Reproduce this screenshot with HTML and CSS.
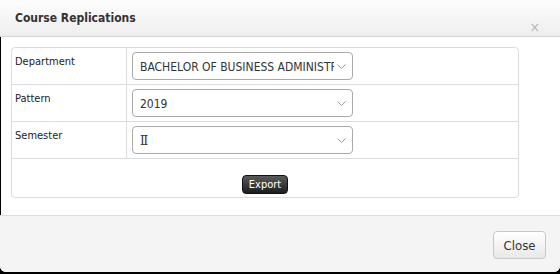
FILE: index.html
```html
<!DOCTYPE html>
<html lang="en">

<head>
    <meta charset="UTF-8">
    <meta name="viewport" content="width=device-width, initial-scale=1.0">
    <title>Course Replications</title>

    <link rel="stylesheet" href="styles.css">
</head>

<body>

    <div class="modal">
        <div class="modal-header">
            <h4>Course Replications</h4>
            <span class="close-x">&times;</span>
        </div>

        <div class="modal-body">
            <!-- Replication filters -->
            <table class="panel">
                <tbody>
                    <tr>
                        <td class="label">Department</td>
                        <td>
                            <div class="select">
                                <span class="value">BACHELOR OF BUSINESS ADMINISTRATION</span>
                                <svg width="9" height="5" viewBox="0 0 9 5"><path d="M0.5 0.5 L4.5 4.5 L8.5 0.5" fill="none" stroke="#999" stroke-width="1"/></svg>
                            </div>
                        </td>
                    </tr>
                    <tr>
                        <td class="label">Pattern</td>
                        <td>
                            <div class="select">
                                <span class="value">2019</span>
                                <svg width="9" height="5" viewBox="0 0 9 5"><path d="M0.5 0.5 L4.5 4.5 L8.5 0.5" fill="none" stroke="#999" stroke-width="1"/></svg>
                            </div>
                        </td>
                    </tr>
                    <tr>
                        <td class="label">Semester</td>
                        <td>
                            <div class="select">
                                <span class="value roman">&#8545;</span>
                                <svg width="9" height="5" viewBox="0 0 9 5"><path d="M0.5 0.5 L4.5 4.5 L8.5 0.5" fill="none" stroke="#999" stroke-width="1"/></svg>
                            </div>
                        </td>
                    </tr>
                    <tr>
                        <td colspan="2" class="actions">
                            <button type="button" class="btn-export">Export</button>
                        </td>
                    </tr>
                </tbody>
            </table>
        </div>

        <div class="modal-footer">
            <button type="button" class="btn-close">Close</button>
        </div>
    </div>

</body>
</html>
```

FILE: styles.css
```css
body {
    font-family: "DejaVu Sans Condensed", "Liberation Sans", sans-serif;
    font-size: 11px;
    margin: 0;
    padding: 0;
    background: #000;
    color: #333;
}

.modal {
    width: 560px;
    height: 272px;
    display: flex;
    flex-direction: column;
    background: #fff;
    border-radius: 0 0 6px 6px;
}

.modal-header {
    height: 37px;
    box-sizing: border-box;
    display: flex;
    justify-content: space-between;
    padding: 0 20px 0 15px;
    background: linear-gradient(#fdfdfd, #eeeeee);
    border-bottom: 1px solid #d4d4d4;
}

.modal-header h4 {
    margin: 0;
    padding-top: 11px;
    font-size: 12px;
    font-weight: bold;
    color: #333;
}

.close-x {
    align-self: flex-end;
    padding-bottom: 2px;
    font-size: 14px;
    line-height: 14px;
    color: #b5b5b5;
}

.modal-body {
    flex: 1;
    padding: 10px 41px 0 10px;
    border-left: 1px solid #000;
}

.panel {
    width: 508px;
    border-collapse: separate;
    border-spacing: 0;
    border: 1px solid #dcdcdc;
    border-radius: 4px;
}

.panel td {
    padding: 4px 5px;
    border-bottom: 1px solid #dcdcdc;
    vertical-align: top;
}

.panel tr:last-child td {
    border-bottom: none;
}

.panel td.label {
    width: 108px;
    padding: 7px 3px 4px 3px;
    border-right: 1px solid #dcdcdc;
    color: #222;
}

.select {
    width: 221px;
    height: 28px;
    box-sizing: border-box;
    display: flex;
    align-items: center;
    gap: 3px;
    padding: 0 6px 0 7px;
    border: 1px solid #aaa;
    border-radius: 4px;
    font-size: 12px;
    color: #333;
}

.select .value {
    flex: 1;
    overflow: hidden;
    white-space: nowrap;
    padding-top: 2px;
}

.select .roman {
    font-family: "DejaVu Serif", serif;
}

.select svg {
    flex-shrink: 0;
}

.panel td.actions {
    padding: 16px 5px 3px;
    text-align: center;
}

.btn-export {
    height: 19px;
    padding: 0 6px;
    font-family: inherit;
    font-size: 11px;
    color: #fff;
    background: linear-gradient(#5a5a5a, #1e1e1e);
    border: 1px solid #111;
    border-radius: 4px;
}

.modal-footer {
    height: 57px;
    box-sizing: border-box;
    display: flex;
    justify-content: flex-end;
    align-items: flex-start;
    padding: 15px 14px 0 0;
    background: #f4f4f4;
    border-top: 1px solid #dddddd;
    border-radius: 0 0 6px 6px;
}

.btn-close {
    width: 53px;
    height: 28px;
    font-family: inherit;
    font-size: 13px;
    color: #333;
    background: linear-gradient(#ffffff, #e8e8e8);
    border: 1px solid #c8c8c8;
    border-radius: 4px;
}
```
